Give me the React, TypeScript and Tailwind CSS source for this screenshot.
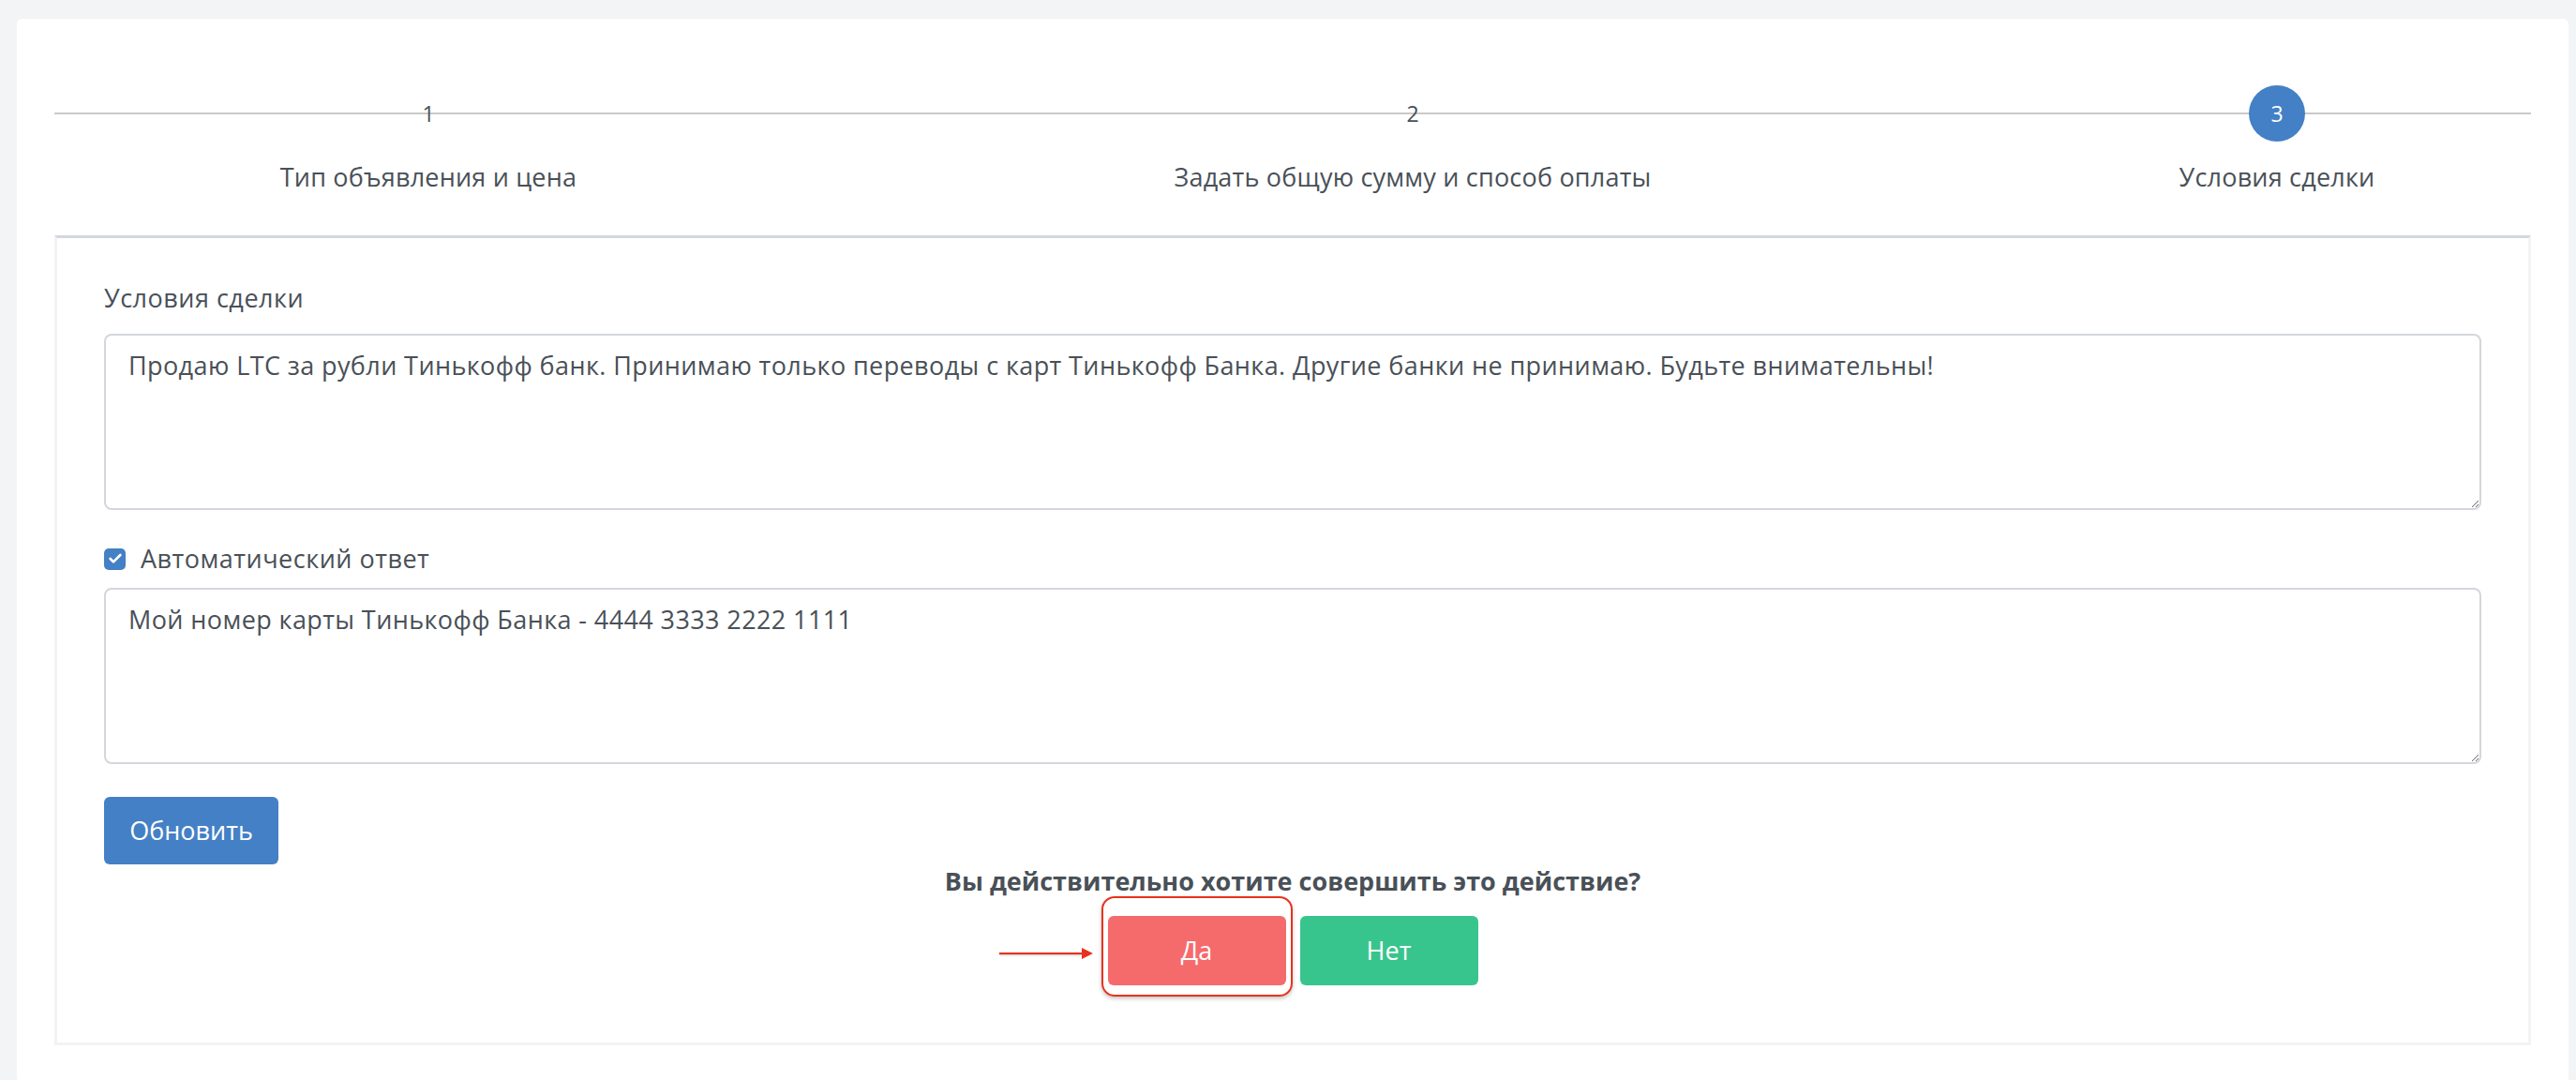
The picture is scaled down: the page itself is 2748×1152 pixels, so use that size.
import { Check } from "lucide-react";

const steps = [
  { n: 1, label: "Тип объявления и цена" },
  { n: 2, label: "Задать общую сумму и способ оплаты" },
  { n: 3, label: "Условия сделки", active: true },
];

export default function App() {
  return (
    <div
      className="min-h-screen bg-[#f3f4f6] pl-[18px] pr-[8px] pt-[20px] text-[#495057]"
      style={{ fontFamily: '"Open Sans", "Noto Sans", sans-serif' }}
    >
      <div className="rounded-[6px] bg-white px-[40px] pt-[71px] pb-[40px]">
        {/* Stepper */}
        <div className="relative">
          <div className="absolute left-0 right-0 top-[29px] h-[2px] bg-[#c9c9c9]" />
          <div className="grid grid-cols-[798px_1302px_1fr]">
            {steps.map((s) => (
              <div key={s.n} className="flex flex-col items-center">
                <div className="relative flex h-[60px] items-center justify-center">
                  {s.active ? (
                    <div className="flex h-[60px] w-[60px] items-center justify-center rounded-full bg-[#4480c5] text-[23px] text-white">
                      {s.n}
                    </div>
                  ) : (
                    <span className="text-[23px] leading-none">{s.n}</span>
                  )}
                </div>
                <div className="mt-[20px] text-[27px] tracking-[0.2px] leading-[36px]">{s.label}</div>
              </div>
            ))}
          </div>
        </div>

        {/* Form box */}
        <div className="mt-[44px] border-[3px] border-[#f1f3f5] border-t-[#d3d7dc] px-[50px] pt-[46px] pb-[61px]">
          <div className="mb-[20px] text-[27px] font-medium tracking-[0.5px] leading-[36px]">Условия сделки</div>
          <textarea
            className="block h-[188px] w-full rounded-[8px] border-2 border-[#d3d7dc] px-[24px] py-[14px] text-[27px] tracking-[0.4px] leading-[36px] text-[#495057] outline-none"
            defaultValue="Продаю LTC за рубли Тинькофф банк. Принимаю только переводы с карт Тинькофф Банка. Другие банки не принимаю. Будьте внимательны!"
          />

          <label className="mt-[34px] mb-[13px] flex items-center gap-[16px]">
            <span className="flex h-[23px] w-[23px] items-center justify-center rounded-[5px] bg-[#4480c5]">
              <Check className="h-[16px] w-[16px] text-white" strokeWidth={4} />
            </span>
            <span className="text-[27px] font-medium tracking-[0.5px] leading-[36px]">Автоматический ответ</span>
          </label>
          <textarea
            className="block h-[188px] w-full rounded-[8px] border-2 border-[#d3d7dc] px-[24px] py-[14px] text-[27px] tracking-[0.4px] leading-[36px] text-[#495057] outline-none"
            defaultValue="Мой номер карты Тинькофф Банка - 4444 3333 2222 1111"
          />

          <button className="mt-[35px] h-[72px] w-[186px] rounded-[6px] bg-[#4480c5] text-[27px] text-white">
            Обновить
          </button>

          <div className="flex flex-col items-center">
            <div className="text-[27px] font-bold leading-[36px]">
              Вы действительно хотите совершить это действие?
            </div>
            <div className="mt-[19px] flex gap-[15px]">
              <div className="relative">
                {/* annotation */}
                <div className="pointer-events-none absolute -left-[7px] -right-[7px] -top-[21px] -bottom-[12px] rounded-[14px] border-2 border-[#e8321e] shadow-[0_2px_4px_rgba(0,0,0,0.25)]" />
                <div className="pointer-events-none absolute -left-[116px] top-[34px] flex items-center">
                  <div className="h-[2px] w-[88px] bg-[#e8321e] shadow-[0_1px_2px_rgba(0,0,0,0.25)]" />
                  <svg width="12" height="12" viewBox="0 0 12 12">
                    <path d="M0 0 L12 6 L0 12 Z" fill="#e8321e" />
                  </svg>
                </div>
                <button className="h-[74px] w-[190px] rounded-[6px] bg-[#f56b6c] text-[27px] text-white">Да</button>
              </div>
              <button className="h-[74px] w-[190px] rounded-[6px] bg-[#38c58d] text-[27px] text-white">Нет</button>
            </div>
          </div>
        </div>
      </div>
    </div>
  );
}
